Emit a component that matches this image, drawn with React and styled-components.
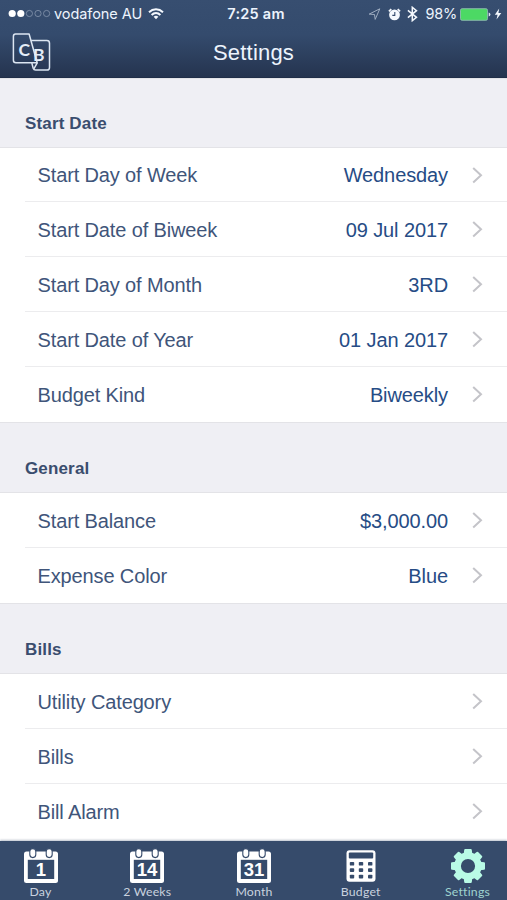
import * as React from 'react';
import styled, { createGlobalStyle } from 'styled-components';

const COLOR_NAVY = '#364b6b';
const COLOR_VALUE = '#264c85';
const COLOR_MINT = '#b9fbe6';

const GlobalStyle = createGlobalStyle`
    * {
        box-sizing: border-box;
    }

    body {
        margin: 0;
        background: #efeff4;
        font-family: 'Liberation Sans', Arial, sans-serif;
    }
`;

const Screen = styled.div`
    display: flex;
    flex-direction: column;
    width: 507px;
    height: 900px;
    overflow: hidden;
`;

const Header = styled.header`
    flex: none;
    height: 78px;
    color: #edf4fd;
    background: linear-gradient(180deg, #374e70 0%, #344b6d 45%, #25344f 100%);
    border-bottom: 1px solid #202e48;
`;

const StatusBar = styled.div`
    display: grid;
    grid-template-columns: 1fr auto 1fr;
    align-items: center;
    height: 28px;
    padding: 0 5px 0 8px;
    font-family: Inter, sans-serif;
    font-size: 14.5px;
    line-height: 28px;
`;

const StatusGroup = styled.div`
    display: flex;
    align-items: center;
    justify-content: ${(props) => (props.$end ? 'flex-end' : 'flex-start')};
`;

const StatusIcons = styled.div`
    display: flex;
    align-items: center;
    gap: 6.5px;
`;

const Carrier = styled.span`
    margin: 0 6px 0 3px;
    letter-spacing: -0.06px;
`;

const Clock = styled.span`
    font-weight: 600;
    letter-spacing: 0.25px;
    padding-left: 2px;
`;

const Percent = styled.span`
    margin: 0 3px 0 7px;
    letter-spacing: -0.2px;
`;

const NavBar = styled.div`
    display: grid;
    grid-template-columns: 1fr auto 1fr;
    align-items: center;
    height: 49px;
    padding: 0 12px;
`;

const Title = styled.h1`
    margin: 0;
    font-size: 22px;
    font-weight: 400;
    line-height: 26px;
    letter-spacing: 0.2px;
`;

const Content = styled.main`
    flex: none;
    height: 763px;
    overflow: hidden;
    background: #fff;
`;

const SectionTitle = styled.h2`
    display: flex;
    align-items: flex-end;
    height: ${(props) => (props.$first ? 70 : 71)}px;
    padding: 0 25px 13px;
    margin: 0;
    color: #3a4d6e;
    background: #efeff4;
    border-top: 1px solid #e3e3e7;
    border-bottom: 1px solid #e3e3e7;
    font-size: 17px;
    font-weight: 700;
    line-height: 20px;
    letter-spacing: 0.15px;
`;

const Row = styled.div`
    display: flex;
    align-items: center;
    height: ${(props) => (props.$short ? 54 : 55)}px;
    margin-left: 25px;
    padding: 1px 24px 0 12.5px;
    border-bottom: 1px solid ${(props) => (props.$last ? 'transparent' : '#ececee')};
    font-size: 20px;
    line-height: 24px;
`;

const Label = styled.span`
    flex: 1;
    color: #40557a;
    letter-spacing: -0.13px;
`;

const Value = styled.span`
    margin-right: 24px;
    color: ${COLOR_VALUE};
    letter-spacing: -0.1px;
`;

const TabBar = styled.nav`
    flex: 1;
    display: flex;
    justify-content: space-between;
    padding: 7px 9.5px 0 10.5px;
    background: ${COLOR_NAVY};
    box-shadow: 0 -1px 2px rgba(54, 75, 107, 0.35);
    z-index: 1;
`;

const Tab = styled.div`
    display: flex;
    flex-direction: column;
    align-items: center;
    width: 60px;
    color: ${(props) => (props.$active ? COLOR_MINT : '#fff')};
`;

const TabLabel = styled.span`
    color: ${(props) => (props.$active ? '#9fd3cf' : '#c9d2df')};
    font-family: Lato, sans-serif;
    font-size: 12.3px;
    line-height: 16px;
    letter-spacing: 0.2px;
    white-space: nowrap;
`;

function SignalDots() {
    return (
        <svg width="43" height="12" viewBox="0 0 43 12">
            {[0, 1, 2, 3, 4].map((i) => (
                <circle
                    key={i}
                    cx={4.2 + i * 8.6}
                    cy="5.5"
                    r={i < 2 ? 3.6 : 3.1}
                    fill={i < 2 ? '#fff' : 'none'}
                    stroke={i < 2 ? 'none' : '#8797ae'}
                    strokeWidth="0.8"
                />
            ))}
        </svg>
    );
}

function WifiIcon() {
    return (
        <svg width="16" height="12" viewBox="0 0 16 12" fill="none" stroke="#f4f8fd" strokeWidth="2">
            <path d="M1 4.2C5 .4 11 .4 15 4.2" />
            <path d="M3.6 6.9C6.2 4.5 9.8 4.5 12.4 6.9" />
            <path d="M8 11.2 5.6 8.8Q8 6.9 10.4 8.8Z" fill="#f4f8fd" stroke="none" />
        </svg>
    );
}

function LocationIcon() {
    return (
        <svg width="13" height="13" viewBox="0 0 13 13" fill="none" stroke="#9fadc1" strokeLinejoin="round">
            <path d="M1.2 6.1 11.8.8 7.2 11.4 6.5 6.5Z" />
        </svg>
    );
}

function AlarmIcon() {
    return (
        <svg width="13" height="13" viewBox="0 0 13 13">
            <circle cx="6.5" cy="6.9" r="5.4" fill="#f4f8fd" />
            <path d="M.9 3.4 3.3 1.1M12.1 3.4 9.7 1.1" stroke="#f4f8fd" strokeWidth="1.7" />
            <path d="M6.8 4v3.4H4.3" fill="none" stroke="#364d6f" strokeWidth="1.1" />
        </svg>
    );
}

function BluetoothIcon() {
    return (
        <svg width="11" height="16" viewBox="0 0 11 16" fill="none" stroke="#f4f8fd" strokeWidth="1.5">
            <path d="M.9 4.3 9.5 11.3 5.3 14.7V1.3L9.5 4.7.9 11.7" />
        </svg>
    );
}

function BatteryIcon() {
    return (
        <svg width="31" height="13" viewBox="0 0 31 13">
            <rect x=".5" y=".7" width="27" height="11.6" rx="1.6" fill="#4cd964" stroke="#8fbdb0" strokeWidth=".9" />
            <path d="M28.7 4.5q1.7.5 1.7 2t-1.7 2z" fill="#dce6f0" />
        </svg>
    );
}

function BoltIcon() {
    return (
        <svg width="11" height="12" viewBox="-3 0 11 12" fill="#f4f8fd">
            <path d="M5.2.5.8 6.8h2.8L2.5 11.4 7.3 4.9H4.4Z" />
        </svg>
    );
}

const LogoLetter = styled.text`
    fill: #e4edf8;
    stroke: none;
    font-family: Lato, sans-serif;
    font-size: 17.5px;
    font-weight: 700;
`;

function Logo() {
    return (
        <svg width="40" height="40" viewBox="0 0 40 40" fill="none" stroke="#dce6f2" strokeWidth="1.5" strokeLinejoin="round">
            <path d="M3.5 1H17.1L25.2 29.8H4Q1.4 29.8 1.4 27.3V3.4Q1.4 1 3.5 1Z" />
            <path d="M19.1 7.6H34.9Q37.5 7.6 37.5 10.2V34.4Q37.5 37 34.9 37H23.6Q21.8 37 21.2 35.2L19.8 30" />
            <path d="M25.2 29.8 21.8 36" />
            <LogoLetter x="6.6" y="23.2">
                C
            </LogoLetter>
            <LogoLetter x="21.1" y="28.4">
                B
            </LogoLetter>
        </svg>
    );
}

function Chevron() {
    return (
        <svg width="11" height="17" viewBox="0 0 11 17" fill="none" stroke="#c4c4c9" strokeWidth="2">
            <path d="M1.2 1 9 8.3 1.2 15.6" />
        </svg>
    );
}

const DayNumber = styled.text`
    fill: #fff;
    font-family: 'Liberation Sans', Arial, sans-serif;
    font-size: 18.5px;
    font-weight: 700;
    text-anchor: middle;
`;

function CalendarIcon({ day }) {
    return (
        <svg width="36" height="36" viewBox="0 0 36 36">
            <rect x="1" y="3.5" width="34" height="31.5" rx="2.5" fill="#fff" />
            <rect x="4.8" y="11.8" width="26.4" height="19.2" fill={COLOR_NAVY} />
            <rect x="6.8" y=".6" width="6" height="9" rx="3" fill="#fff" stroke={COLOR_NAVY} strokeWidth="1.1" />
            <rect x="23.2" y=".6" width="6" height="9" rx="3" fill="#fff" stroke={COLOR_NAVY} strokeWidth="1.1" />
            <DayNumber x="18" y="27.9">
                {day}
            </DayNumber>
        </svg>
    );
}

function CalculatorIcon() {
    return (
        <svg width="36" height="36" viewBox="0 0 36 36" fill={COLOR_NAVY}>
            <rect x="3.5" y="2.2" width="29" height="31.6" rx="3" fill="#fff" />
            <rect x="5.8" y="4.6" width="24.4" height="6" rx="1" />
            {[13.9, 20.2, 26.7].map((y) =>
                [6.8, 15.8, 25].map((x) => <rect key={`${x}-${y}`} x={x} y={y} width="4.4" height="3.7" rx=".9" />)
            )}
        </svg>
    );
}

function GearIcon() {
    return (
        <svg width="36" height="36" viewBox="0 0 36 36" fill={COLOR_MINT}>
            <circle cx="18" cy="18" r="10.4" fill="none" stroke={COLOR_MINT} strokeWidth="6.6" />
            {[0, 45, 90, 135, 180, 225, 270, 315].map((angle) => (
                <path key={angle} d="M13.7 6 14.2 1.9Q14.3 1 15.2 1h5.6Q21.7 1 21.8 1.9L22.3 6Z" transform={`rotate(${angle} 18 18)`} />
            ))}
        </svg>
    );
}

const SECTIONS = [
    {
        title: 'Start Date',
        rows: [
            ['Start Day of Week', 'Wednesday'],
            ['Start Date of Biweek', '09 Jul 2017'],
            ['Start Day of Month', '3RD'],
            ['Start Date of Year', '01 Jan 2017'],
            ['Budget Kind', 'Biweekly'],
        ],
    },
    {
        title: 'General',
        rows: [
            ['Start Balance', '$3,000.00'],
            ['Expense Color', 'Blue'],
        ],
    },
    {
        title: 'Bills',
        rows: [['Utility Category'], ['Bills'], ['Bill Alarm']],
    },
];

const TABS = [
    { label: 'Day', icon: <CalendarIcon day="1" /> },
    { label: '2 Weeks', icon: <CalendarIcon day="14" /> },
    { label: 'Month', icon: <CalendarIcon day="31" /> },
    { label: 'Budget', icon: <CalculatorIcon /> },
    { label: 'Settings', icon: <GearIcon />, active: true },
];

export default function App() {
    return (
        <Screen>
            <GlobalStyle />
            <Header>
                <StatusBar>
                    <StatusGroup>
                        <SignalDots />
                        <Carrier>vodafone AU</Carrier>
                        <WifiIcon />
                    </StatusGroup>
                    <Clock>7:25 am</Clock>
                    <StatusGroup $end>
                        <StatusIcons>
                            <LocationIcon />
                            <AlarmIcon />
                            <BluetoothIcon />
                        </StatusIcons>
                        <Percent>98%</Percent>
                        <BatteryIcon />
                        <BoltIcon />
                    </StatusGroup>
                </StatusBar>
                <NavBar>
                    <Logo />
                    <Title>Settings</Title>
                </NavBar>
            </Header>
            <Content>
                {SECTIONS.map((section, i) => (
                    <section key={section.title}>
                        <SectionTitle $first={i === 0}>{section.title}</SectionTitle>
                        {section.rows.map(([label, value], j) => (
                            <Row key={label} $short={i === 0 && j === 0} $last={j === section.rows.length - 1}>
                                <Label>{label}</Label>
                                {value && <Value>{value}</Value>}
                                <Chevron />
                            </Row>
                        ))}
                    </section>
                ))}
            </Content>
            <TabBar>
                {TABS.map(({ label, icon, active }) => (
                    <Tab key={label} $active={active}>
                        {icon}
                        <TabLabel $active={active}>{label}</TabLabel>
                    </Tab>
                ))}
            </TabBar>
        </Screen>
    );
}
